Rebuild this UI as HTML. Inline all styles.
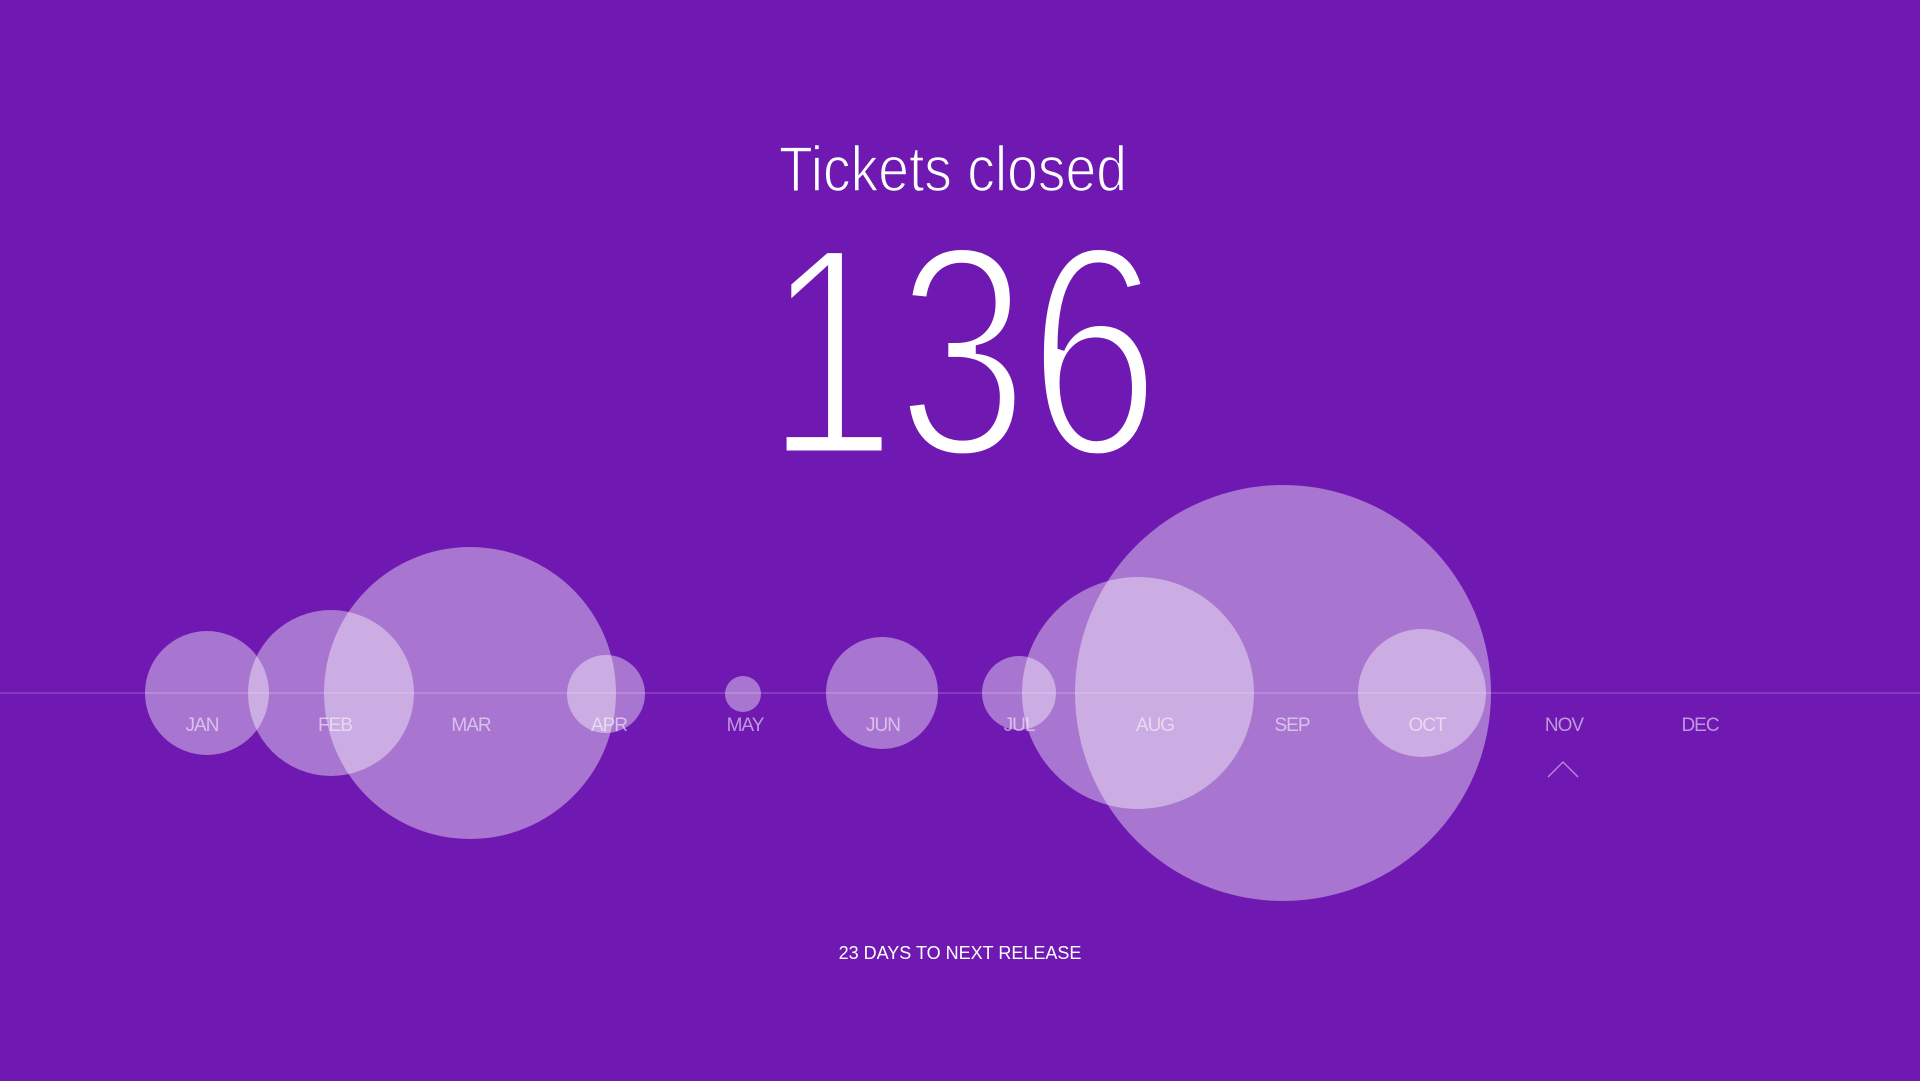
<!DOCTYPE html>
<html><head><meta charset="utf-8"><style>
html,body{margin:0;padding:0;width:1920px;height:1081px;overflow:hidden;background:#6f19b2;font-family:"Liberation Sans",sans-serif;}
</style></head><body>
<svg width="1920" height="1081" viewBox="0 0 1920 1081" style="position:absolute;left:0;top:0">
<text x="779" y="191" fill="#fff" stroke="#6f19b2" stroke-width="1.5" paint-order="fill stroke" font-size="64" textLength="348" lengthAdjust="spacingAndGlyphs" font-family="Liberation Sans, sans-serif">Tickets closed</text>
<text x="765" y="455" fill="#fff" stroke="#6f19b2" stroke-width="9" paint-order="fill stroke" font-size="300" textLength="395" lengthAdjust="spacingAndGlyphs" font-family="Liberation Sans, sans-serif">136</text>
<line x1="0" y1="693" x2="1920" y2="693" stroke="rgba(255,255,255,0.3)" stroke-width="1"/>
<g fill="#fff" fill-opacity="0.4">
<circle cx="207" cy="693" r="62"/>
<circle cx="331" cy="693" r="83"/>
<circle cx="470" cy="693" r="146"/>
<circle cx="606" cy="694" r="39"/>
<circle cx="743" cy="694" r="18"/>
<circle cx="882" cy="693" r="56"/>
<circle cx="1019" cy="693" r="37"/>
<circle cx="1138" cy="693" r="116"/>
<circle cx="1283" cy="693" r="208"/>
<circle cx="1422" cy="693" r="64"/>
</g>
<g fill="#fff" fill-opacity="0.55" font-size="19" text-anchor="middle" font-family="Liberation Sans, sans-serif" letter-spacing="-1">
<text x="202" y="731">JAN</text><text x="335" y="731">FEB</text><text x="471" y="731">MAR</text>
<text x="609" y="731">APR</text><text x="745" y="731">MAY</text><text x="883" y="731">JUN</text>
<text x="1019" y="731">JUL</text><text x="1155" y="731">AUG</text><text x="1292" y="731">SEP</text>
<text x="1427" y="731">OCT</text><text x="1564" y="731">NOV</text><text x="1700" y="731">DEC</text>
</g>
<polyline points="1548,777 1563,762 1578,777" fill="none" stroke="rgba(255,255,255,0.5)" stroke-width="1.3"/>
<text x="960" y="959" fill="#fff" font-size="18" text-anchor="middle" font-family="Liberation Sans, sans-serif">23 DAYS TO NEXT RELEASE</text>
</svg>
</body></html>
